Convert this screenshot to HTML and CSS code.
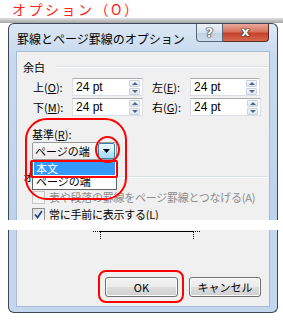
FILE: index.html
```html
<!DOCTYPE html>
<html>
<head>
  <title>罫線とページ罫線のオプション</title>
  <link rel="stylesheet" href="styles.css">
</head>
<body>
  <div class="caption">オプション（O）</div>
  <div class="dim"></div>

  <div class="window window-top">
    <div class="titlebar">
      <span class="title">罫線とページ罫線のオプション</span>
      <div class="caption-buttons">
        <span class="btn-help">?</span>
        <span class="btn-close">x</span>
      </div>
    </div>

    <div class="client client-top">
      <div class="group"><span>余白</span></div>

      <div class="margins">
        <label>上(<u>O</u>):</label>
        <div class="spin">
          <span>24 pt</span>
          <div class="arrows">
            <span class="arrow up"></span>
            <span class="arrow down"></span>
          </div>
        </div>
        <label>左(<u>E</u>):</label>
        <div class="spin">
          <span>24 pt</span>
          <div class="arrows">
            <span class="arrow up"></span>
            <span class="arrow down"></span>
          </div>
        </div>
        <label>下(<u>M</u>):</label>
        <div class="spin">
          <span>24 pt</span>
          <div class="arrows">
            <span class="arrow up"></span>
            <span class="arrow down"></span>
          </div>
        </div>
        <label>右(<u>G</u>):</label>
        <div class="spin">
          <span>24 pt</span>
          <div class="arrows">
            <span class="arrow up"></span>
            <span class="arrow down"></span>
          </div>
        </div>
      </div>

      <div class="basis-label">基準(<u>R</u>):</div>
      <div class="combo">
        <span>ページの端</span>
        <span class="drop">
          <svg width="7" height="4" viewBox="0 0 7 4"><path d="M0 0h7L3.5 4z" fill="#000"/></svg>
        </span>
        <ul class="droplist">
          <li class="selected">本文</li>
          <li>ページの端</li>
        </ul>
      </div>

      <div class="group group-options"><span>オプション</span></div>

      <div class="check disabled">
        <span class="box"></span>
        <span>表や段落の罫線をページ罫線とつなげる(A)</span>
      </div>
      <div class="check">
        <span class="box checked">
          <svg width="9" height="9" viewBox="0 0 9 9"><path d="M1 4.5l2.5 3L8 1" fill="none" stroke="#26458f" stroke-width="1.8"/></svg>
        </span>
        <span>常に手前に表示する(L)</span>
      </div>
    </div>
  </div>

  <div class="gap"></div>

  <div class="window window-bottom">
    <div class="client client-bottom">
      <svg class="preview" width="110" height="10" viewBox="0 0 110 10">
        <path d="M0 1.5h7M100 1.5h8M7.5 2v8M100.5 2v8" stroke="#000" stroke-dasharray="1 1"/>
        <path d="M7 1.5h94" stroke="#000"/>
      </svg>
      <div class="buttons">
        <button class="btn-ok">OK</button>
        <button class="btn-cancel">キャンセル</button>
      </div>
    </div>
  </div>

  <!-- red annotations -->
  <div class="mark mark-basis"></div>
  <div class="mark mark-arrow"></div>
  <div class="mark mark-item"></div>
  <div class="mark mark-ok"></div>
</body>
</html>
```

FILE: styles.css
```css
* {
  box-sizing: border-box;
}

body {
  width: 283px;
  height: 322px;
  margin: 0;
  position: relative;
  overflow: hidden;
  background: #fff;
  color: #000;
  font-family: "Noto Sans CJK JP", "Noto Sans", sans-serif;
  font-size: 11px;
  line-height: 14px;
}

u {
  text-decoration: underline;
  text-underline-offset: 1px;
}

.caption {
  height: 18px;
  padding-left: 12px;
  font-size: 14px;
  line-height: 18px;
  letter-spacing: 2.5px;
  color: #f22;
}

.dim {
  height: 5px;
  background: linear-gradient(#e2e2e2, #a4a4a4);
}

.gap {
  height: 10px;
}

/* window frame */
.window {
  margin-left: 8px;
  width: 270px;
  border: 1px solid #3d4756;
  background: linear-gradient(#dce8f5 0, #c8daee 30px, #bdd3ec);
}

.window-top {
  height: 197px;
  border-bottom: none;
  border-radius: 6px 6px 0 0;
}

.window-bottom {
  height: 83px;
  border-top: none;
  border-radius: 0 0 6px 6px;
  background: #c3d7ee;
}

.titlebar {
  height: 27px;
  display: flex;
  align-items: flex-start;
  padding-left: 8px;
}

.title {
  flex: 1;
  margin-top: 8px;
  font-size: 12px;
  line-height: 14px;
}

.caption-buttons {
  display: flex;
  margin-right: 8px;
}

.btn-help,
.btn-close {
  height: 18px;
  display: flex;
  align-items: center;
  justify-content: center;
  color: #fff;
  font-family: "DejaVu Sans", sans-serif;
  font-weight: bold;
  font-size: 13px;
  text-shadow: 0 0 1px #222, 0 0 1px #222, 0 0 2px #333;
}

.btn-help {
  width: 27px;
  border: 1px solid #56667c;
  border-top: none;
  border-radius: 0 0 0 4px;
  background: linear-gradient(#edf2f8, #d6e1ee 50%, #c2d2e5 51%, #cfdcec);
}

.btn-close {
  width: 46px;
  border: 1px solid #5a2a22;
  border-top: none;
  border-left: none;
  border-radius: 0 0 4px 0;
  background: linear-gradient(#e9a99c, #d8735f 45%, #c5412b 55%, #d56a4d);
  padding-bottom: 2px;
}

/* client area */
.client {
  margin: 0 7px;
  background: #f0f0f0;
  border: 1px solid #a9bbd0;
}

.client-top {
  height: 169px;
  border-bottom: none;
  position: relative;
  overflow: hidden;
}

.client-bottom {
  height: 77px;
  border-top: none;
}

.group {
  display: flex;
  align-items: center;
  gap: 11px;
  height: 14px;
  margin-top: 8px;
  padding-left: 6px;
  padding-right: 2px;
}

.group::after {
  content: "";
  flex: 1;
  border-top: 1px solid #d5dfe5;
  border-bottom: 1px solid #fff;
}

.group-options {
  margin-top: 10px;
}

.margins {
  display: grid;
  grid-template-columns: 39px 80px 38px 70px;
  grid-auto-rows: 18px;
  row-gap: 2px;
  margin-top: 4px;
  padding-left: 16px;
}

.margins label {
  display: flex;
  align-items: center;
}

.spin {
  width: 71px;
  height: 18px;
  display: flex;
  align-items: center;
  padding-left: 3px;
  background: #fff;
  border: 1px solid #dbdfe6;
  border-top-color: #abadb3;
  font-family: "Liberation Sans", sans-serif;
  font-size: 12px;
}

.margins .spin:nth-child(4) {
  width: 70px;
}

.arrows {
  margin-left: auto;
  margin-right: 2px;
  width: 11px;
  display: flex;
  flex-direction: column;
  gap: 1px;
}

.arrow {
  height: 7px;
  border: 1px solid #c9d3df;
  border-radius: 1px;
  background: linear-gradient(#f4f7fb, #dde6f0);
  display: flex;
  align-items: center;
  justify-content: center;
}

.arrow::after {
  content: "";
  border-left: 3px solid transparent;
  border-right: 3px solid transparent;
}

.arrow.up::after {
  border-bottom: 3px solid #4f6588;
}

.arrow.down::after {
  border-top: 3px solid #4f6588;
}

.basis-label {
  margin-top: 11px;
  padding-left: 15px;
}

.combo {
  position: relative;
  margin: 1px 0 0 15px;
  width: 85px;
  height: 18px;
  display: flex;
  align-items: center;
  padding-left: 2px;
  background: linear-gradient(#f8f8f8, #ececec);
  border: 1px solid #9a9a9a;
  border-radius: 2px;
}

.drop {
  position: absolute;
  right: 1px;
  top: 0;
  width: 17px;
  height: 16px;
  display: flex;
  align-items: center;
  justify-content: center;
  border: 1px solid #3c7fb1;
  border-radius: 2px;
  background: linear-gradient(#eaf6fd, #d9f0fc 50%, #bee6fd 51%, #a7d9f5);
}

.droplist {
  position: absolute;
  left: -1px;
  top: 17px;
  width: 85px;
  margin: 0;
  padding: 1px;
  list-style: none;
  background: #fff;
  border: 1px solid #646464;
  z-index: 2;
}

.droplist li {
  height: 13px;
  line-height: 13px;
  padding-left: 2px;
}

.droplist .selected {
  background: #3399ff;
  color: #fff;
}

.check {
  display: flex;
  align-items: center;
  gap: 4px;
  height: 14px;
  margin-top: 6px;
  padding-left: 15px;
  letter-spacing: -0.25px;
}

.check + .check {
  margin-top: 3px;
}

.check.disabled {
  color: #8c8c8c;
}

.box {
  width: 13px;
  height: 13px;
  display: flex;
  align-items: center;
  justify-content: center;
  border: 1px solid #8e8f8f;
  background: linear-gradient(135deg, #dcdcdc, #fbfbfb);
}

.disabled .box {
  border-color: #c4c4c4;
  background: #f4f4f4;
}

.preview {
  display: block;
  margin-left: 76px;
}

.buttons {
  display: flex;
  justify-content: flex-end;
  gap: 11px;
  margin-top: 37px;
  padding-right: 8px;
}

button {
  height: 20px;
  padding: 0;
  font-family: inherit;
  font-size: 11px;
  color: #000;
  border: 1px solid #707070;
  border-radius: 3px;
  background: linear-gradient(#f2f2f2, #ebebeb 50%, #dddddd 51%, #cfcfcf);
  box-shadow: inset 0 0 0 1px #fcfcfc;
}

.btn-ok {
  width: 73px;
}

.btn-cancel {
  width: 72px;
}

/* annotations */
.mark {
  position: absolute;
  border: 2px solid #f00;
  z-index: 5;
}

.mark-basis {
  left: 25px;
  top: 118px;
  width: 102px;
  height: 82px;
  border-radius: 22px;
}

.mark-arrow {
  left: 95px;
  top: 136px;
  width: 25px;
  height: 27px;
  border-radius: 50%;
}

.mark-item {
  left: 30px;
  top: 160px;
  width: 88px;
  height: 18px;
  border-radius: 2px;
}

.mark-ok {
  left: 98px;
  top: 270px;
  width: 86px;
  height: 33px;
  border-radius: 8px;
}
```
